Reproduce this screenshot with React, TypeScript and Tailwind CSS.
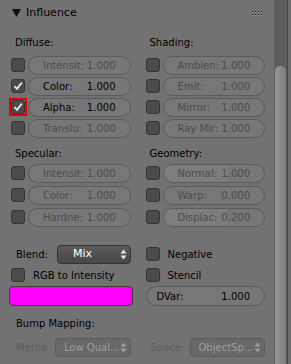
import React from 'react';
import clsx from 'clsx';

type FieldProps = {
    label: string;
    value: string;
    active?: boolean;
    fill?: number;
};

const Checkbox: React.FC<{ checked?: boolean }> = ({ checked }) => (
    <div className="flex h-[14px] w-[14px] shrink-0 items-center justify-center rounded-[3px] border border-[#343434] bg-[#4b4b4b]">
        {checked && (
            <svg width="10" height="10" viewBox="0 0 10 10">
                <path d="M1.5 5.2 L4 7.8 L8.8 1.6" fill="none" stroke="#e6e6e6" strokeWidth="1.8" />
            </svg>
        )}
    </div>
);

const Field: React.FC<FieldProps> = ({ label, value, active, fill }) => (
    <div className="relative h-[19px] flex-1 overflow-hidden rounded-full border border-[#5b5b5b] bg-[#777777]">
        {fill !== undefined && (
            <div className="absolute inset-y-0 left-0 bg-[#7d7d7d]" style={{ width: `${fill}%` }} />
        )}
        <div
            className={clsx(
                'relative flex h-full items-center justify-between whitespace-nowrap pl-[14px] pr-[14px]',
                active ? 'text-black' : 'text-[#4c4c4c]'
            )}
        >
            <span>{label}</span>
            <span>{value}</span>
        </div>
    </div>
);

const Arrows: React.FC<{ color: string }> = ({ color }) => (
    <svg width="7" height="11" viewBox="0 0 7 11" className="shrink-0">
        <path d="M0.5 4.5 L3.5 0.5 L6.5 4.5 Z" fill={color} />
        <path d="M0.5 6.5 L3.5 10.5 L6.5 6.5 Z" fill={color} />
    </svg>
);

const Row: React.FC<{ checked?: boolean; marked?: boolean } & FieldProps> = ({ checked, marked, ...field }) => (
    <div className="flex h-[20px] items-center gap-[3px]">
        {marked ? (
            <div className="-m-[2px] border-2 border-[#e10000]">
                <Checkbox checked={checked} />
            </div>
        ) : (
            <Checkbox checked={checked} />
        )}
        <Field {...field} />
    </div>
);

const diffuse = [
    { label: 'Intensit:', value: '1.000' },
    { label: 'Color:', value: '1.000', checked: true, active: true },
    { label: 'Alpha:', value: '1.000', checked: true, active: true, marked: true },
    { label: 'Translu:', value: '1.000' },
];

const shading = [
    { label: 'Ambien:', value: '1.000' },
    { label: 'Emit:', value: '1.000' },
    { label: 'Mirror:', value: '1.000' },
    { label: 'Ray Mir:', value: '1.000' },
];

const specular = [
    { label: 'Intensit:', value: '1.000' },
    { label: 'Color:', value: '1.000' },
    { label: 'Hardne:', value: '1.000' },
];

const geometry = [
    { label: 'Normal:', value: '1.000', fill: 63 },
    { label: 'Warp:', value: '0.000' },
    { label: 'Displac:', value: '0.200', fill: 63 },
];

export default function App() {
    return (
        <div className="flex h-[364px] w-[291px] overflow-hidden bg-[#727272] font-['DejaVu_Sans',sans-serif] text-[10px] text-black">
            <div className="flex w-[274px] flex-col pl-[11px] pr-[9px]">
                {/* header */}
                <div className="flex h-[26px] items-center">
                    <svg width="9" height="8" viewBox="0 0 9 8" className="ml-[1px]">
                        <path d="M0 0 H9 L4.5 8 Z" fill="#0d0d0d" />
                    </svg>
                    <span className="ml-[5px] text-[11px]">Influence</span>
                    <svg width="10" height="5" viewBox="0 0 10 5" className="ml-auto mr-[3px]">
                        {[0, 3, 6, 9].map((x) => (
                            <React.Fragment key={x}>
                                <rect x={x} y={0} width="1" height="1" fill="#1e1e1e" />
                                <rect x={x} y={3} width="1" height="1" fill="#1e1e1e" />
                                <rect x={x} y={1} width="1" height="1" fill="#9a9a9a" />
                                <rect x={x} y={4} width="1" height="1" fill="#9a9a9a" />
                            </React.Fragment>
                        ))}
                    </svg>
                </div>

                <div className="mt-[8px] grid grid-cols-2 gap-x-[15px]">
                    <div className="flex flex-col">
                        <div className="h-[17px] pl-[4px] leading-[17px]">Diffuse:</div>
                        <div className="mt-[4px] flex flex-col gap-[1px]">
                            {diffuse.map((r) => (
                                <Row key={r.label} {...r} />
                            ))}
                        </div>
                        <div className="mt-[7px] h-[17px] pl-[4px] leading-[17px]">Specular:</div>
                        <div className="mt-[1px] flex flex-col gap-[2px]">
                            {specular.map((r) => (
                                <Row key={r.label} {...r} />
                            ))}
                        </div>
                    </div>
                    <div className="flex flex-col">
                        <div className="h-[17px] pl-[4px] leading-[17px]">Shading:</div>
                        <div className="mt-[4px] flex flex-col gap-[1px]">
                            {shading.map((r) => (
                                <Row key={r.label} {...r} />
                            ))}
                        </div>
                        <div className="mt-[7px] h-[17px] pl-[4px] leading-[17px]">Geometry:</div>
                        <div className="mt-[1px] flex flex-col gap-[2px]">
                            {geometry.map((r) => (
                                <Row key={r.label} {...r} />
                            ))}
                        </div>
                    </div>
                </div>

                <div className="mt-[17px] grid grid-cols-2 gap-x-[15px] whitespace-nowrap">
                    <div className="flex flex-col gap-[1px]">
                        <div className="flex h-[20px] items-center">
                            <span className="w-[46px] pl-[5px]">Blend:</span>
                            <div className="flex h-[19px] flex-1 items-center justify-between rounded-[4px] border border-[#343434] bg-gradient-to-b from-[#5c5c5c] to-[#474747] pl-[15px] pr-[3px] text-[11px] text-white">
                                <span>Mix</span>
                                <Arrows color="#e6e6e6" />
                            </div>
                        </div>
                        <div className="flex h-[20px] items-center gap-[8px]">
                            <Checkbox />
                            <span>RGB to Intensity</span>
                        </div>
                        <div className="-mx-[2px] h-[20px] rounded-[4px] border border-[#3c3c3c] bg-[#ff00ff]" />
                        <div className="mt-[8px] h-[17px] pl-[5px] leading-[17px]">Bump Mapping:</div>
                        <div className="mt-[4px] flex h-[20px] items-center">
                            <span className="w-[45px] pl-[5px] text-[#5a5a5a]">Metho</span>
                            <div className="flex h-[19px] flex-1 items-center justify-between rounded-[4px] border border-[#5c5c5c] bg-[#686868] pl-[8px] pr-[3px] text-[#9e9e9e]">
                                <span>Low Qual...</span>
                                <Arrows color="#9e9e9e" />
                            </div>
                        </div>
                    </div>
                    <div className="flex flex-col gap-[1px]">
                        <div className="flex h-[20px] items-center gap-[8px]">
                            <Checkbox />
                            <span>Negative</span>
                        </div>
                        <div className="flex h-[20px] items-center gap-[8px]">
                            <Checkbox />
                            <span>Stencil</span>
                        </div>
                        <div className="flex h-[20px] items-center">
                            <div className="flex h-[20px] flex-1 items-center justify-between rounded-full border border-[#5b5b5b] bg-[#777777] pl-[10px] pr-[14px]">
                                <span>DVar:</span>
                                <span>1.000</span>
                            </div>
                        </div>
                        <div className="mt-[8px] h-[17px]" />
                        <div className="mt-[4px] flex h-[20px] items-center">
                            <span className="w-[44px] pl-[5px] text-[#5a5a5a]">Space:</span>
                            <div className="flex h-[19px] flex-1 items-center justify-between rounded-[4px] border border-[#5c5c5c] bg-[#686868] pl-[8px] pr-[3px] text-[#9e9e9e]">
                                <span>ObjectSp...</span>
                                <Arrows color="#9e9e9e" />
                            </div>
                        </div>
                    </div>
                </div>
            </div>

            {/* scrollbar */}
            <div className="flex w-[17px]">
                <div className="flex w-[13px] flex-col bg-[#5d5d5d] px-[1px] pt-[66px]">
                    <div className="flex-1 rounded-t-full bg-gradient-to-r from-[#979797] to-[#7f7f7f]" />
                </div>
                <div className="w-[1px] bg-[#464646]" />
                <div className="w-[3px] bg-[#6c6c6c]" />
            </div>
        </div>
    );
}
